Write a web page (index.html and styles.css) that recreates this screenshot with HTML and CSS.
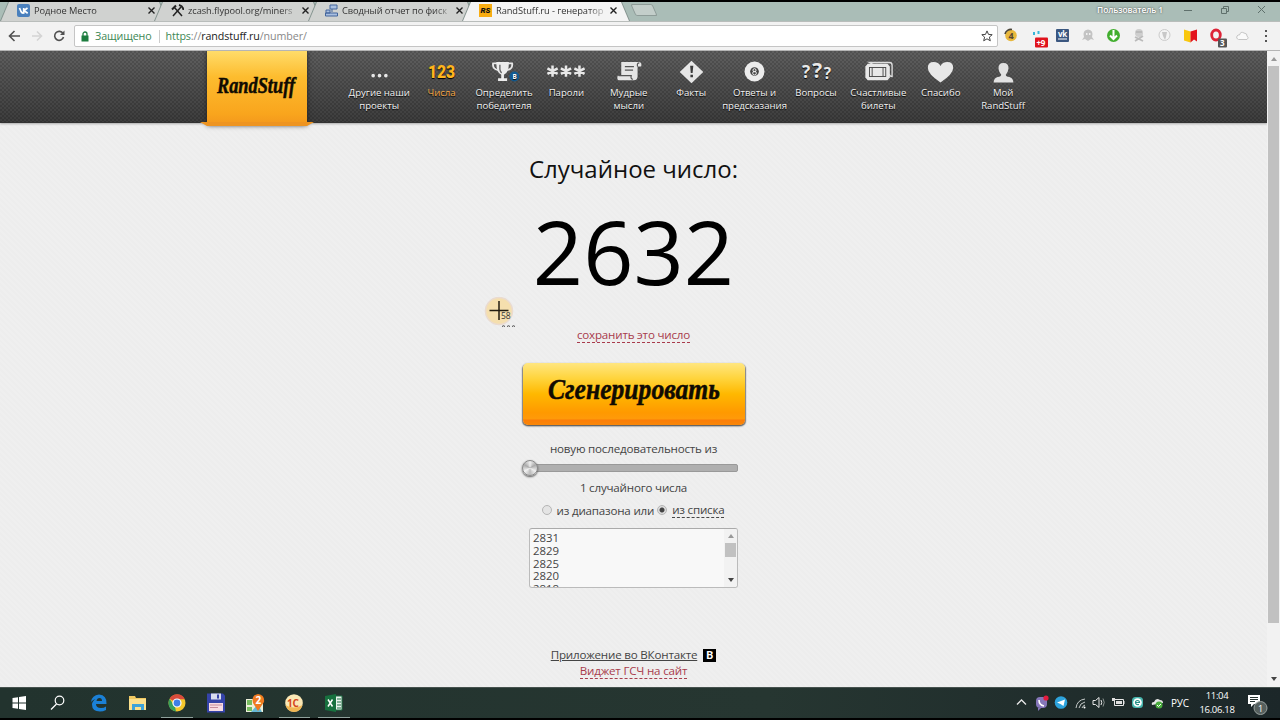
FILE: index.html
```html
<!DOCTYPE html>
<html lang="ru">
<head>
    <meta charset="UTF-8">
    <title>RandStuff.ru - генератор случайных чисел</title>
    <link rel="stylesheet" href="styles.css">
</head>
<body>
    <div class="tabs">
        <div class="tab first">
            <svg class="fav" viewBox="0 0 13 13"><rect width="13" height="13" rx="2" fill="#4a80bd"/><path d="M2.5 4l1.5 3.5Q5 9.5 6.7 9V4M10.5 4L7 6.5 10.700 9.200" fill="none" stroke="#fff" stroke-width="1.7"/></svg>
            <span class="tab-title">Родное Место</span>
            <svg class="x" viewBox="0 0 7 7"><path d="M.5.5l6 6M6.500.5l-6 6"/></svg>
        </div>
        <div class="tab">
            <svg class="fav" viewBox="0 0 13 13"><path d="M2 12L10 3M11 12L3 3" stroke="#222" stroke-width="1.500"/><path d="M1 5.500L5 1.500M8 1Q12 2 12.500 6" fill="none" stroke="#222" stroke-width="2"/></svg>
            <span class="tab-title">zcash.flypool.org/miners</span>
            <svg class="x" viewBox="0 0 7 7"><path d="M.5.5l6 6M6.500.5l-6 6"/></svg>
        </div>
        <div class="tab">
            <svg class="fav" viewBox="0 0 13 13"><path d="M5 1h7v4H5zM7 5v3M1 6h4v3H1zM.5 9h12v3H.5z" fill="#a9bfe0" stroke="#42659c"/></svg>
            <span class="tab-title">Сводный отчет по фиск</span>
            <svg class="x" viewBox="0 0 7 7"><path d="M.5.5l6 6M6.500.5l-6 6"/></svg>
        </div>
        <div class="tab active">
            <span class="fav rs">RS</span>
            <span class="tab-title">RandStuff.ru - генератор</span>
            <svg class="x" viewBox="0 0 7 7"><path d="M.5.5l6 6M6.500.5l-6 6"/></svg>
        </div>
        <div class="new-tab"></div>
        <div class="window-buttons">
            <span class="user">Пользователь 1</span>
            <svg width="84" height="10" viewBox="0 0 84 10" fill="none" stroke="#5f706c"><path d="M1 5.500h8M38.500 3.500h5v5h-5zM40.500 3V1.500h5v5H44M75 1l7 7M82 1l-7 7"/></svg>
        </div>
    </div>

    <div class="toolbar">
        <svg class="nav-buttons" viewBox="0 0 74 30" fill="none" stroke-width="1.600">
            <path d="M20 15H10M14.500 10L9.500 15l5 5" stroke="#505050"/>
            <path d="M32 15h9M37 10.500l4.500 4.500-4.500 4.500" stroke="#d4d4d4"/>
            <path d="M63 12.500a4.500 4.500 0 1 0 .5 3.500" stroke="#505050"/><path d="M64.500 9.500v4.500H60z" fill="#505050"/>
        </svg>
        <div class="address">
            <svg width="8" height="11" viewBox="0 0 8 11"><path d="M2 5V3a2 2 0 0 1 4 0v2" fill="none" stroke="#1d7d3f" stroke-width="1.300"/><rect x=".5" y="4.500" width="7" height="6" fill="#1d7d3f"/></svg>
            <span class="secure">Защищено</span>
            <span class="url"><span class="green">https</span>://<b>randstuff.ru</b>/number/</span>
            <svg class="star" width="12" height="12" viewBox="0 0 12 12"><path d="M6 .9l1.500 3.500 3.700.3-2.800 2.400.9 3.700L6 8.800l-3.300 2 .9-3.700L.8 4.700l3.700-.3z" fill="none" stroke="#444"/></svg>
        </div>
        <svg class="extensions" viewBox="-2 1 280 30" font-family="Open Sans, sans-serif">
            <circle cx="11" cy="15.500" r="5.800" fill="#e8b83c"/><path d="M5 14a6 6 0 0 1 7-4.500" stroke="#4a4438" stroke-width="1.600" fill="none"/><text x="8.500" y="19" font-size="9" font-weight="bold" fill="#543">4</text>
            <path d="M34 15v-3M38.500 14v-3" stroke="#36b5d8" stroke-width="2"/><rect x="35" y="17.500" width="13" height="10" rx="1" fill="#e0131c"/><text x="36.500" y="25.700" font-size="8" font-weight="bold" fill="#fff">+9</text>
            <rect x="56" y="9" width="13" height="13" rx="1" fill="#3b5780"/><text x="58" y="16.500" font-size="8" font-weight="bold" fill="#fff">vk</text><path d="M58 19h9" stroke="#fff"/>
            <path d="M84 17q-2-7 4-7.500 6 .5 4 7.500l2 3-3-1-3 2-3-2-3 1z" fill="#c3c3c3"/><path d="M86 14h1.500M89 14h1.500" stroke="#fff" stroke-width="1.500"/>
            <circle cx="113.500" cy="15.500" r="6.500" fill="#42ae2f"/><path d="M113.500 10v8M110 15.500l3.500 3.500 3.500-3.500" fill="none" stroke="#fff" stroke-width="2"/>
            <circle cx="139" cy="13" r="4" fill="#cecece"/><path d="M135 17l8 4M143 16l-8 5M136 12h6" stroke="#bbb" stroke-width="1.800"/>
            <circle cx="164.500" cy="15" r="5.500" fill="#f4f4f4" stroke="#ccc"/><path d="M162 12h5l-1 5-1 3-2-4z" fill="#c8c8c8"/>
            <path d="M184 9.500l6.500 2v11l-6.500-2z" fill="#f9c70d"/><path d="M190.500 11.500l6.500-2v12l-3-2-3.500 3z" fill="#e3141d"/>
            <ellipse cx="216" cy="15" rx="4.300" ry="5" fill="none" stroke="#dd2438" stroke-width="2.800"/><rect x="218" y="18.500" width="9" height="9" rx="1" fill="#555"/><text x="220" y="26" font-size="8" font-weight="bold" fill="#fff">3</text>
            <path d="M238.500 19.500q-3-1-1.500-3.500 1-1.500 2.500-1 1-4 4.500-2 3.500.5 3 3 2.500 2 0 3.500z" fill="#fafafa" stroke="#c5c5c5"/>
            <path d="M265 10h2v2h-2zM265 15h2v2h-2zM265 20h2v2h-2z" fill="#555"/>
        </svg>
    </div>

    <div class="viewport">
        <div class="page">
            <header>
                <a class="logo">
                    <svg width="100" height="70" viewBox="0 0 100 70"><text class="script" x="10" y="42" font-size="23" textLength="78" lengthAdjust="spacingAndGlyphs">RandStuff</text></svg>
                </a>
                <nav>
                    <a><svg viewBox="0 0 32 28" fill="#e8e8e8"><circle cx="9" cy="18" r="2"/><circle cx="16" cy="18" r="2"/><circle cx="23" cy="18" r="2"/></svg>Другие наши<br>проекты</a>
                    <a class="current"><svg viewBox="0 0 32 28"><text x="1" y="20.500" font-family="Roboto, sans-serif" font-weight="900" font-size="19.500" textLength="30" lengthAdjust="spacingAndGlyphs" fill="#fdb51c">123</text></svg>Числа</a>
                    <a><svg viewBox="0 0 32 28"><path d="M8 3h14q0 12-5.500 14v4h3.500v3H10v-3h3.500v-4Q8 15 8 3z" fill="#ececec"/><path d="M9 4.500H4.500q-1 6 5.500 7.500M21 4.500h4.500q1 6-5.500 7.500" fill="none" stroke="#e8e8e8" stroke-width="2"/><path d="M12 6v5q.5 3 2 4" fill="none" stroke="#666" stroke-width="1.500"/><circle cx="28" cy="19" r="5.500" fill="#125b91"/><text x="25.800" y="21.800" font-size="7" font-weight="bold" fill="#fff">B</text></svg>Определить<br>победителя</a>
                    <a><svg class="wide" viewBox="0 0 42 28" stroke="#e8e8e8" stroke-width="2.700"><path d="M6.500 7v12M1 10l11 6M12 10L1 16M21 7v12M15.500 10l11 6M26.500 10l-11 6M35.500 7v12M30 10l11 6M41 10l-11 6"/></svg>Пароли</a>
                    <a><svg viewBox="0 0 32 28"><path d="M8 3h20q3 1 2 5h-4v11q0 4-4 4H5q-2-1-1-5h4z" fill="#e5e5e5"/><path d="M12 8h10M12 12h9M5 18h14q-1 4 2 4M26 8q-1-4 2-4" fill="none" stroke="#555" stroke-width="1.300"/></svg>Мудрые<br>мысли</a>
                    <a><svg viewBox="0 0 32 28"><path d="M16 1.500l13 12.500-13 12.500L3 14z" fill="#e6e6e6"/><path d="M14.500 7h3.500l-.8 8h-2zM14.800 17h2.800v2.800h-2.800z" fill="#3c3c3c"/></svg>Факты</a>
                    <a class="answers"><svg viewBox="0 0 32 28"><circle cx="16" cy="13.500" r="11" fill="#ececec"/><circle cx="16" cy="13.500" r="4.800" fill="#444"/><circle cx="16" cy="12" r="1.700" fill="none" stroke="#fff"/><circle cx="16" cy="15.300" r="2" fill="none" stroke="#fff"/></svg>Ответы и<br>предсказания</a>
                    <a><svg viewBox="0 0 32 28" fill="#e8e8e8" font-weight="bold"><text x="1" y="20.500" font-size="19">?</text><text x="12.500" y="20.500" font-size="23">?</text><text x="25" y="21.500" font-size="17">?</text></svg>Вопросы</a>
                    <a><svg viewBox="0 0 32 28"><path d="M6 3.500h22q3 0 3 3V19q-2 0-3-2z" fill="none" stroke="#dedede" stroke-width="1.500"/><path d="M4 5h22l2.500 3v12L26 23H4l-2.500-3V8z" fill="#e8e8e8"/><rect x="6" y="9" width="18" height="10" fill="none" stroke="#444"/><path d="M9 9v10M21 9v10" stroke="#444"/></svg>Счастливые<br>билеты</a>
                    <a><svg viewBox="0 0 32 28"><path d="M16 25.500Q2 16 2 9.500 2 3 8.500 3q5.500 0 7.500 4.500Q18 3 23.500 3 30 3 30 9.500 30 16 16 25.500z" fill="#e8e8e8"/></svg>Спасибо</a>
                    <a><svg viewBox="0 0 32 28"><path d="M16 4q6 0 5.500 6.500-.5 4-3 6.500 0 2 4 2.500 4 1 4.500 6H5q.5-5 4.500-6 4-.5 4-2.500-2.500-2.500-3-6.500Q10 4 16 4z" fill="#e2e2e2"/></svg>Мой<br>RandStuff</a>
                </nav>
            </header>

            <main>
                <h1>Случайное число:</h1>
                <div class="number">2632</div>
                <div class="save"><a class="dashed red">сохранить это число</a></div>
                <button class="generate">
                    <svg width="222" height="62" viewBox="0 0 222 62"><text class="script" x="25" y="36" font-size="29" textLength="172" lengthAdjust="spacingAndGlyphs">Сгенерировать</text></svg>
                </button>
                <p class="sequence">новую последовательность из</p>
                <div class="slider"><div class="knob"></div></div>
                <p class="count">1 случайного числа</p>
                <div class="source">
                    <span class="radio"></span><span>из диапазона или</span>
                    <span class="radio checked"></span><a class="dashed">из списка</a>
                </div>
                <div class="list">
                    <div class="values">2831<br>2829<br>2825<br>2820<br>2818</div>
                    <div class="list-scroll"><i class="up"></i><i class="thumb"></i><i class="down"></i></div>
                </div>
                <div class="links">
                    <div><a class="app">Приложение во ВКонтакте</a><span class="vk">B</span></div>
                    <div><a class="dashed red">Виджет ГСЧ на сайт</a></div>
                </div>
            </main>
            <svg class="cursor" viewBox="0 0 36 34"><circle cx="15" cy="14" r="13.500" fill="#f5dfae" stroke="#eadbd0" stroke-width="1.500"/><path d="M5.500 13.500h19M15 4v19" stroke="#221c10" stroke-width="1.500"/><text x="17" y="22" font-size="8.500" fill="#333">58</text><path d="M18 29.500q1.500-1.500 3 0M23 29.500q1.500-1.500 3 0M28 29.500q1.500-1.500 3 0" stroke="#444" fill="none"/></svg>
        </div>
        <div class="scrollbar"><i class="up"></i><i class="thumb"></i><i class="down"></i></div>
    </div>

    <div class="taskbar">
        <svg class="apps" viewBox="0 1 360 32">
            <path d="M12.500 11l5.500-.8v5.300h-5.500zM19 10l7-1v6.500h-7zM12.500 16.500H18v5.300l-5.500-.8zM19 16.500h7V23l-7-1z" fill="#fff"/>
            <circle cx="59.500" cy="13.500" r="4.300" fill="none" stroke="#fff" stroke-width="1.200"/><path d="M56.500 17l-5.500 5.500" stroke="#fff" stroke-width="1.200"/>
            <path d="M91 15q1-7 8-7.500 8 .5 7.500 9.500H96q0 4 5 4 3 0 5-1.500V23q-3 1.500-6 1.500-8 0-8-7 0-3 3.500-5.500Q92.500 13 91 15zM96.500 14h5.500q0-3-2.500-3t-3 3z" fill="#1b80d6"/>
            <path d="M129 9h6l1 2h10v12h-17z" fill="#efc861"/><path d="M129 12h17v11h-17z" fill="#fbe08c"/><path d="M132 23v-6h12v6h-3v-3h-6v3z" fill="#3da3d9"/>
            <circle cx="177" cy="16" r="8.500" fill="#f4c72c"/><path d="M177 16L169.600 11.800a8.500 8.500 0 0 1 15.200.4H177z" fill="#d94b3c"/><path d="M169.600 11.800L175 20l1 4.500a8.500 8.500 0 0 1-6.400-12.700z" fill="#39a05a"/><circle cx="177" cy="16" r="4" fill="#3f7fe6" stroke="#fff" stroke-width="1.200"/>
            <path d="M207 6.500h16l2 2v17h-18z" fill="#3543a8"/><path d="M211 6.500h10v6h-10z" fill="#d8dded"/><path d="M217 7.500h2v4h-2z" fill="#3543a8"/><path d="M209 16h14v8h-14z" fill="#f7dbe2"/><path d="M210 18h12M210 20.500h8" stroke="#c78b9c"/>
            <path d="M246 12h17v13h-17z" fill="#edf0db"/><path d="M247 13h5v5h-5zM247 20h5v4h-5z" fill="#77bb60"/><path d="M251 25l7-8 4 8z" fill="#65b8d5"/><path d="M258 24l-5-8q-2-8 5-9 7 1 6 8z" fill="#f07a20"/><text x="255.500" y="16.500" font-size="10" font-weight="bold" fill="#fff">2</text>
            <circle cx="294" cy="16" r="8.800" fill="#fbe8b5"/><path d="M285.500 18q8 5 17 0-2 7-8.500 7t-8.500-7z" fill="#f0b654"/><text x="287" y="19.500" font-size="10" font-weight="bold" fill="#d4451b">1C</text>
            <path d="M335 9h7v14h-7z" fill="#e9f2ec" stroke="#217346"/><path d="M337 12h4M337 15h4M337 18h4M337 21h4" stroke="#217346"/><path d="M325 9l11-2v18l-11-2z" fill="#17703e"/><path d="M328 12.500l4.500 7M332.500 12.500l-4.500 7" stroke="#fff" stroke-width="1.500"/>
            <path d="M161 30.500h32M279 30.500h31M318 30.500h32" stroke="#8fa19c"/>
        </svg>
        <div class="tray">
            <svg width="187" height="32" viewBox="-17 0 187 32" fill="none">
                <path d="M16 17.500l4.500-4.500 4.500 4.500" stroke="#e8e8e8" stroke-width="1.300"/>
                <rect x="35" y="10" width="11" height="11" rx="4" fill="#8576b9"/><path d="M37 21v3l3-3" fill="#8576b9"/><path d="M38 13q0 5 5 6" stroke="#fff" stroke-width="1.600"/><circle cx="45" cy="11" r="2.600" fill="#e31b3d"/>
                <circle cx="60" cy="15.500" r="6.300" fill="#2da3dc"/><path d="M56 15.500l8-3-1.500 6.500-3-2z" fill="#fff"/>
                <path d="M75 21q1-8 9-9M78 21q1-5 6-6M81 21q.5-2 3-3" stroke="#c6cbca"/><circle cx="83.500" cy="20.500" r="1" fill="#fff"/>
                <path d="M92 13.500h2.500l3.500-3v10l-3.500-3H92zM100 13q1.500 2.500 0 5" stroke="#e8e8e8"/><path d="M102 11.500q2.500 4 0 8" stroke="#8a9290"/>
                <path d="M113.500 12.500h9v6h-9zM123 14v3" stroke="#e8e8e8"/><path d="M115 14h6v3h-6zM111 11h3v3h-3z" fill="#dedede"/>
                <rect x="131" y="10" width="11" height="11" rx="3.500" fill="#48b7af"/><circle cx="136.500" cy="15.500" r="4.300" fill="#fff"/><path d="M134.500 15.500h4q0-2-2-2t-2 2q0 2.500 3.500 2" stroke="#289087" stroke-width="1.200"/>
                <path d="M151 18q-1-3 2-3 2-5 6-2 3 0 3 3z" fill="#e5e5e5"/><circle cx="158" cy="18" r="3.500" fill="#49ad3d"/><path d="M156 18l1.500 1.500L160 17" stroke="#fff"/>
            </svg>
            <span class="lang">РУС</span>
            <div class="clock">11:04<br>16.06.18</div>
            <svg class="notify" viewBox="0 0 26 28" fill="none"><path d="M1 6h12v9H7l-3 3v-3H1z" fill="#fff"/><path d="M3 8.500h8M3 10.500h8M3 12.500h5" stroke="#24312f"/><circle cx="13.500" cy="19" r="6.500" fill="#56605e" stroke="#98a09e"/><text x="11" y="22.500" font-size="9" fill="#fff">1</text></svg>
        </div>
    </div>
</body>
</html>
```

FILE: styles.css
```css
* {
    box-sizing: border-box;
}
body {
    margin: 0;
    width: 1280px;
    height: 720px;
    overflow: hidden;
    display: flex;
    flex-direction: column;
    font-family: "Open Sans", sans-serif;
    font-size: 11.6px;
    letter-spacing: -.2px;
    color: #444;
    border-top: 2px solid #000;
    border-bottom: 2px solid #000;
    background: #ededed;
}
h1, p {
    margin: 0;
    font-weight: normal;
}

/* browser */
.tabs {
    height: 19px;
    display: flex;
    background: #aabdb7;
    font-size: 9.3px;
    letter-spacing: -.08px;
    color: #333;
}
.tab {
    position: relative;
    z-index: 0;
    width: 169px;
    margin-left: -15px;
    padding: 0 13px 2px 18px;
    display: flex;
    align-items: center;
    gap: 4px;
    flex: none;
}
.tab.first {
    margin-left: -1px;
}
.tab::before, .tab::after {
    content: "";
    position: absolute;
    z-index: -1;
    inset: 0;
    background: #84938f;
    clip-path: polygon(9px 0, 161px 0, 169px 100%, 1px 100%);
}
.tab::after {
    background: #d0d2d0;
    clip-path: polygon(10px 0, 160px 0, 168px 100%, 2px 100%);
}
.tab.active::after {
    background: #f4f4f4;
}
.tab.active {
    z-index: 1;
}
.fav {
    width: 13px;
    height: 13px;
    flex: none;
}
.rs {
    background: #f9ad12;
    color: #111;
    font: italic 900 8px/13px Roboto, sans-serif;
    text-align: center;
}
.tab-title {
    flex: 1;
    white-space: nowrap;
    mask-image: linear-gradient(to right, #000 92px, rgba(0, 0, 0, .2) 109px);
}
.x {
    width: 7px;
    height: 7px;
    stroke: #222;
    stroke-width: 1.4;
}
.new-tab {
    width: 22px;
    height: 12px;
    margin: 2px 0 0 3px;
    background: #c3ceca;
    border: 1px solid #8e9c98;
    border-radius: 2px;
    transform: skewX(24deg);
}
.window-buttons {
    margin-left: auto;
    margin-right: 13px;
    display: flex;
    align-items: center;
    gap: 20px;
    padding-bottom: 4px;
}
.user {
    font-size: 8.4px;
    font-weight: 600;
    color: #fff;
    text-shadow: 0 0 2px #333;
}
.toolbar {
    height: 30px;
    display: flex;
    align-items: center;
    background: #f2f2f2;
    border-top: 1px solid #b9bdbb;
    border-bottom: 1px solid #b5b5b5;
}
.nav-buttons {
    width: 74px;
    height: 30px;
}
.address {
    width: 924px;
    height: 22px;
    display: flex;
    align-items: center;
    background: #fff;
    border: 1px solid #c5c5c5;
    border-radius: 2px;
    padding: 0 4px 0 6px;
    font-size: 10.7px;
    letter-spacing: -.1px;
}
.secure {
    color: #3d8754;
    margin-left: 6px;
    padding-right: 7px;
    border-right: 1px solid #ccc;
    line-height: 13px;
}
.url {
    margin-left: 6px;
    color: #888;
}
.url b {
    font-weight: normal;
    color: #222;
}
.green {
    color: #3d8754;
}
.star {
    margin-left: auto;
}
.extensions {
    width: 280px;
    height: 30px;
}

/* site */
.viewport {
    height: 636px;
    display: flex;
}
.page {
    position: relative;
    width: 1267px;
    overflow: hidden;
    background: repeating-linear-gradient(45deg, #ededed 0 2px, #efefef 2px 4px);
}
header {
    height: 72px;
    display: flex;
    padding-left: 207px;
    background:
        linear-gradient(rgba(90, 90, 90, .35), rgba(30, 30, 30, .55)),
        repeating-conic-gradient(#4d4d4d 0 25%, #626262 0 50%) 0 0 / 4px 4px;
    border-bottom: 1px solid #333;
    box-shadow: 0 1px 2px #aaa;
}
.logo {
    position: relative;
    width: 100px;
    height: 74px;
    background: linear-gradient(#ffdc6a, #fdbc2e 35%, #f9a51d 85%, #f3971c);
    box-shadow: 0 0 5px #222;
}
.logo::after {
    content: "";
    position: absolute;
    left: -7px;
    right: -7px;
    bottom: -1px;
    height: 4px;
    background: #ee9420;
    clip-path: polygon(0 0, 100% 0, 107px 100%, 7px 100%);
}
.script {
    font-family: "Liberation Serif", serif;
    font-weight: bold;
    font-style: italic;
    letter-spacing: 0;
    fill: #100b02;
    stroke: #100b02;
    stroke-width: .5px;
}
nav {
    display: flex;
    margin-left: 41px;
}
nav a {
    width: 62.4px;
    display: flex;
    flex-direction: column;
    align-items: center;
    text-align: center;
    white-space: nowrap;
    font-size: 9.6px;
    letter-spacing: -.02px;
    line-height: 12.5px;
    color: #f2f2f2;
    text-shadow: 0 1px 1px #000;
    padding-top: 8px;
}
nav a.current {
    color: #f5a847;
}
nav a.answers {
    padding-left: 2px;
}
nav svg {
    width: 29px;
    height: 26px;
    margin-bottom: 2px;
    flex: none;
    overflow: visible;
}
nav svg.wide {
    width: 42px;
}
main {
    display: flex;
    flex-direction: column;
    align-items: center;
    padding-top: 26px;
}
h1 {
    font-size: 24px;
    letter-spacing: 0;
    line-height: 40px;
    color: #111;
}
.number {
    margin-top: 2px;
    font-size: 88px;
    letter-spacing: 0;
    line-height: 120px;
    height: 120px;
    color: #000;
}
.save {
    margin-top: 17px;
    height: 16px;
    line-height: 14px;
}
.dashed {
    display: inline-block;
    line-height: 14px;
    border-bottom: 1px dashed #444;
}
.red {
    color: #a83b4c;
    border-color: #a83b4c;
}
.generate {
    width: 222px;
    height: 62px;
    margin-top: 19px;
    padding: 0;
    border: 0;
    border-radius: 5px;
    background: linear-gradient(#ffe680, #ffd43c 25%, #ffb800 50%, #ff9900 80%, #ff9a0a 90%, #fb7d08 92%, #f98708);
    box-shadow: 0 1px 2px #555, -1px 1px 1px #999, 1px 1px 1px #999;
}
.sequence {
    margin-top: 16px;
    line-height: 16px;
}
.slider {
    position: relative;
    width: 208px;
    height: 8px;
    margin-top: 7px;
    background: #afafaf;
    border: 1px solid #999;
    border-radius: 2px;
}
.knob {
    position: absolute;
    left: -9px;
    top: -5px;
    width: 16px;
    height: 16px;
    border-radius: 50%;
    border: 1px solid #888;
    background: conic-gradient(#eee, #aaa, #eee, #bbb, #f2f2f2, #aaa, #eee);
    box-shadow: 0 1px 2px #555;
}
.count {
    margin-top: 8px;
    line-height: 16px;
}
.source {
    display: flex;
    align-items: center;
    margin-top: 6px;
    height: 16px;
    padding-right: 4px;
}
.source .dashed {
    margin-top: 1px;
}
.radio {
    width: 10px;
    height: 10px;
    border: 1px solid #b5b5b5;
    border-radius: 50%;
    background: #e4e4e4;
    margin: 0 5px 0 3px;
}
.radio.checked {
    background: radial-gradient(#444 0 2px, #ddd 3px);
}
.list {
    width: 209px;
    height: 60px;
    margin-top: 10px;
    display: flex;
    background: #f8f8f8;
    border: 1px solid #bbb;
    border-radius: 3px;
    border-top-color: #aaa;
    overflow: hidden;
}
.values {
    flex: 1;
    padding: 3px 3px 0;
    font-size: 11.4px;
    letter-spacing: 0;
    line-height: 12.8px;
}
.list-scroll, .scrollbar {
    display: flex;
    flex-direction: column;
    align-items: center;
    background: #f2f2f2;
}
.list-scroll {
    width: 13px;
    padding: 5px 0;
}
.up, .down {
    border: 3px solid transparent;
    border-top-width: 0;
    border-bottom: 4px solid #999;
}
.down {
    border-width: 4px 3px 0;
    border-top-color: #444;
    margin-top: auto;
}
.thumb {
    width: 11px;
    background: #c1c1c1;
}
.list-scroll .thumb {
    height: 14px;
    margin-top: 5px;
}
.links {
    margin-top: 59px;
    text-align: center;
}
.links div {
    height: 16px;
    line-height: 16px;
}
.app {
    text-decoration: underline;
}
.vk {
    display: inline-block;
    width: 13px;
    height: 13px;
    margin-left: 6px;
    background: #000;
    color: #fff;
    font: bold 11px/13px Roboto, sans-serif;
}
.cursor {
    position: absolute;
    left: 484px;
    top: 246px;
    width: 36px;
    height: 34px;
    letter-spacing: 0;
}
.scrollbar {
    width: 13px;
    padding: 6px 0;
}
.scrollbar .thumb {
    height: 557px;
    margin-top: 5px;
}

/* taskbar */
.taskbar {
    height: 31px;
    display: flex;
    justify-content: space-between;
    background: linear-gradient(to right, #22332e, #263631 60%, #1c2729);
    border-top: 1px solid #46524e;
    color: #fff;
}
.apps {
    width: 360px;
    height: 32px;
}
.tray {
    display: flex;
    align-items: center;
    font-size: 10px;
}
.tray svg {
    flex: none;
}
.lang {
    width: 20px;
    margin-right: 4px;
}
.clock {
    width: 44px;
    font-size: 9.5px;
    line-height: 14px;
    text-align: center;
    letter-spacing: -.3px;
}
.notify {
    width: 26px;
    height: 28px;
    margin-left: 8px;
    margin-right: 7px;
}
```
